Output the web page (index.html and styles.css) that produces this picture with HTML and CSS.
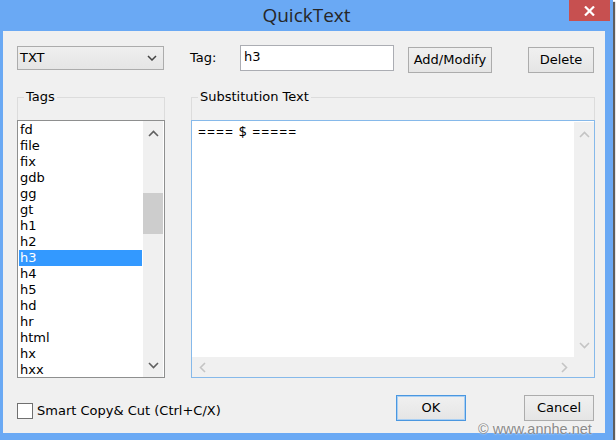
FILE: index.html
```html
<!DOCTYPE html>
<html>
<head>
<meta charset="utf-8">
<link rel="stylesheet" href="styles.css">
</head>
<body>
<div class="window">
  <div class="titlebar">
    <span class="spacer"></span>
    <span class="title">QuickText</span>
    <span class="close-wrap">
      <span class="close">
        <svg width="11" height="10" viewBox="0 0 11 10"><path d="M1 0.5 L10 9.5 M10 0.5 L1 9.5" stroke="#fff" stroke-width="2.2"/></svg>
      </span>
    </span>
  </div>
  <div class="client">
    <div class="toprow">
      <div class="combo">
        <span class="combo-text">TXT</span>
        <svg class="chev" width="10" height="6" viewBox="0 0 10 6"><path d="M1 1 L5 5 L9 1" fill="none" stroke="#444" stroke-width="1.5"/></svg>
      </div>
      <span class="taglabel">Tag:</span>
      <div class="input">h3</div>
      <div class="btn addmod">Add/Modify</div>
      <div class="btn delete">Delete</div>
    </div>
    <div class="groups">
      <fieldset class="group tags">
        <legend>Tags</legend>
        <div class="listbox">
          <ul class="items">
            <li>fd</li><li>file</li><li>fix</li><li>gdb</li><li>gg</li><li>gt</li><li>h1</li><li>h2</li>
            <li class="sel">h3</li><li>h4</li><li>h5</li><li>hd</li><li>hr</li><li>html</li><li>hx</li><li>hxx</li>
          </ul>
          <div class="vscroll">
            <div class="arrow"><svg width="11" height="7" viewBox="0 0 11 7"><path d="M1 6 L5.5 1.5 L10 6" fill="none" stroke="#606060" stroke-width="1.6"/></svg></div>
            <div class="track"><div class="thumb"></div></div>
            <div class="arrow"><svg width="11" height="7" viewBox="0 0 11 7"><path d="M1 1 L5.5 5.5 L10 1" fill="none" stroke="#606060" stroke-width="1.6"/></svg></div>
          </div>
        </div>
      </fieldset>
      <fieldset class="group subst">
        <legend>Substitution Text</legend>
        <div class="textarea">
          <div class="ta-text">==== $ =====</div>
          <div class="vscroll light">
            <div class="arrow"><svg width="11" height="7" viewBox="0 0 11 7"><path d="M1 6 L5.5 1.5 L10 6" fill="none" stroke="#c4c4c4" stroke-width="1.6"/></svg></div>
            <div class="track"></div>
            <div class="arrow"><svg width="11" height="7" viewBox="0 0 11 7"><path d="M1 1 L5.5 5.5 L10 1" fill="none" stroke="#c4c4c4" stroke-width="1.6"/></svg></div>
          </div>
          <div class="hscroll">
            <div class="harrow"><svg width="7" height="11" viewBox="0 0 7 11"><path d="M6 1 L1.5 5.5 L6 10" fill="none" stroke="#c4c4c4" stroke-width="1.6"/></svg></div>
            <div class="htrack"></div>
            <div class="harrow"><svg width="7" height="11" viewBox="0 0 7 11"><path d="M1 1 L5.5 5.5 L1 10" fill="none" stroke="#c4c4c4" stroke-width="1.6"/></svg></div>
          </div>
          <div class="corner"></div>
        </div>
      </fieldset>
    </div>
    <div class="bottomrow">
      <span class="checkbox"></span>
      <span class="checklabel">Smart Copy&amp; Cut (Ctrl+C/X)</span>
      <div class="btn ok">OK</div>
      <div class="btn cancel">Cancel</div>
    </div>
  </div>
  <div class="watermark">© www.annhe.net</div>
</div>
</body>
</html>
```

FILE: styles.css
```css
html, body {
  margin: 0;
  padding: 0;
  background: #ffffff;
}
body {
  font-family: "DejaVu Sans", "Open Sans", sans-serif;
  font-size: 13px;
  color: #000;
}
.window {
  position: relative;
  width: 613px;
  height: 440px;
  box-sizing: border-box;
  background: #6aa9f4;
  padding: 0 8px 7px 3px;
  display: flex;
  flex-direction: column;
  box-shadow: 2px 2px 1px rgba(40, 40, 40, 0.75);
}
.titlebar {
  height: 31px;
  display: grid;
  grid-template-columns: 1fr auto 1fr;
  margin: 0 -8px 0 -3px;
}
.title {
  font-family: "Open Sans", "Noto Sans", sans-serif;
  font-size: 19px;
  line-height: 31px;
  color: #262626;
}
.close-wrap {
  justify-self: end;
  padding-right: 3px;
}
.close {
  width: 41px;
  height: 21px;
  background: #c75050;
  display: flex;
  align-items: center;
  justify-content: center;
}
.client {
  flex: 1;
  background: #f0f0f0;
  display: flex;
  flex-direction: column;
}
.toprow {
  display: flex;
  align-items: flex-start;
  padding: 14px 0 0 14px;
  height: 28px;
}
.combo {
  margin-top: 1px;
  width: 147px;
  height: 24px;
  box-sizing: border-box;
  border: 1px solid #acacac;
  background: linear-gradient(#efefef, #e5e5e5);
  display: flex;
  align-items: center;
  justify-content: space-between;
  padding: 0 6px 0 2px;
}
.combo-text {
  line-height: 20px;
}
.taglabel {
  margin-left: 26px;
  width: 50px;
  line-height: 18px;
  margin-top: 4px;
}
.input {
  width: 154px;
  height: 26px;
  box-sizing: border-box;
  border: 1px solid #abadb3;
  background: #fff;
  padding: 0 3px;
  line-height: 22px;
}
.btn {
  box-sizing: border-box;
  height: 26px;
  border: 1px solid #acacac;
  background: linear-gradient(#f0f0f0, #e5e5e5);
  text-align: center;
  line-height: 23px;
}
.addmod {
  margin-left: 14px;
  margin-top: 2px;
  width: 84px;
}
.delete {
  margin-left: 36px;
  margin-top: 2px;
  width: 66px;
}
.groups {
  display: flex;
  gap: 26px;
  padding: 15px 0 0 14px;
}
.group {
  margin: 0;
  padding: 0;
  min-width: 0;
  border: 1px solid #dcdcdc;
  border-bottom: none;
}
.group legend {
  margin-left: 6px;
  padding: 0 2px;
  line-height: 18px;
}
.tags {
  width: 148px;
  box-sizing: border-box;
}
.subst {
  width: 404px;
  box-sizing: border-box;
}
.listbox {
  margin: 14px -1px 0;
  height: 258px;
  box-sizing: border-box;
  border: 1px solid #8e8f8f;
  background: #fff;
  display: flex;
  overflow: hidden;
}
.items {
  list-style: none;
  margin: 0;
  padding: 1px 1px 0;
  flex: 1;
}
.items li {
  height: 16px;
  line-height: 16px;
  padding-left: 1px;
}
.items li.sel {
  background: #3399ff;
  color: #fff;
}
.vscroll {
  width: 20px;
  display: flex;
  flex-direction: column;
  background: #f0f0f0;
  margin-right: 1px;
}
.arrow {
  height: 24px;
  display: flex;
  align-items: center;
  justify-content: center;
}
.track {
  flex: 1;
}
.thumb {
  margin-top: 48px;
  height: 41px;
  background: #cdcdcd;
}
.textarea {
  margin: 14px -1px 0;
  height: 258px;
  box-sizing: border-box;
  border: 1px solid #86b9ea;
  background: #fff;
  display: grid;
  grid-template-columns: 1fr 20px;
  grid-template-rows: 1fr 20px;
}
.ta-text {
  font-family: "Open Sans", "Noto Sans", sans-serif;
  font-size: 14px;
  padding: 3px 6px;
  line-height: 16px;
  letter-spacing: 1px;
}
.vscroll.light {
  margin: 1px 1px 0 0;
}
.hscroll {
  display: flex;
  background: #f0f0f0;
}
.harrow {
  width: 20px;
  display: flex;
  align-items: center;
  justify-content: center;
}
.htrack {
  flex: 1;
}
.corner {
  background: #f0f0f0;
}
.bottomrow {
  display: flex;
  align-items: flex-start;
  padding: 17px 11px 0 14px;
}
.checkbox {
  margin-top: 8px;
  width: 16px;
  height: 16px;
  box-sizing: border-box;
  border: 1px solid #707070;
  background: #fff;
}
.checklabel {
  margin-left: 4px;
  margin-top: 7px;
  line-height: 18px;
}
.ok {
  margin-left: auto;
  width: 70px;
  border: 1px solid #4a97e0;
  box-shadow: inset 0 0 0 1px #a9cff3;
}
.cancel {
  margin-left: 58px;
  width: 70px;
}
.watermark {
  position: absolute;
  left: 478px;
  top: 419px;
  white-space: nowrap;
  font-family: "Liberation Sans", Arial, sans-serif;
  font-size: 14.5px;
  line-height: 20px;
  color: #8a8a8a;
  text-shadow: 0 0 2px #fff;
}
```
